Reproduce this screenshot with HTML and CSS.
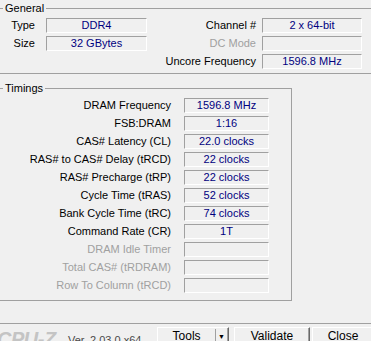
FILE: index.html
```html
<!DOCTYPE html>
<html>
<head>
<meta charset="utf-8">
<link rel="stylesheet" href="styles.css">
</head>
<body>
<div class="app">
  <fieldset class="group general">
    <legend>General</legend>
    <div class="ggrid">
      <span class="lbl l1">Type</span><span class="val">DDR4</span>
      <span class="lbl l2">Channel #</span><span class="val">2 x 64-bit</span>
      <span class="lbl l1">Size</span><span class="val">32 GBytes</span>
      <span class="lbl l2 dis">DC Mode</span><span class="val"></span>
      <span></span><span></span>
      <span class="lbl l2">Uncore Frequency</span><span class="val">1596.8 MHz</span>
    </div>
  </fieldset>
  <fieldset class="group timings">
    <legend>Timings</legend>
    <div class="tgrid">
      <span class="lbl">DRAM Frequency</span><span class="val">1596.8 MHz</span>
      <span class="lbl">FSB:DRAM</span><span class="val">1:16</span>
      <span class="lbl">CAS# Latency (CL)</span><span class="val">22.0 clocks</span>
      <span class="lbl">RAS# to CAS# Delay (tRCD)</span><span class="val">22 clocks</span>
      <span class="lbl">RAS# Precharge (tRP)</span><span class="val">22 clocks</span>
      <span class="lbl">Cycle Time (tRAS)</span><span class="val">52 clocks</span>
      <span class="lbl">Bank Cycle Time (tRC)</span><span class="val">74 clocks</span>
      <span class="lbl">Command Rate (CR)</span><span class="val">1T</span>
      <span class="lbl dis">DRAM Idle Timer</span><span class="val"></span>
      <span class="lbl dis">Total CAS# (tRDRAM)</span><span class="val"></span>
      <span class="lbl dis">Row To Column (tRCD)</span><span class="val"></span>
    </div>
  </fieldset>
  <div class="tabedge"></div>
  <div class="bottom">
    <span class="logo">CPU-Z</span>
    <span class="ver">Ver. 2.03.0.x64</span>
    <div class="btn tools"><span class="tl">Tools</span><span class="arrow">&#9660;</span></div>
    <div class="btn validate">Validate</div>
    <div class="btn close">Close</div>
  </div>
</div>
</body>
</html>
```

FILE: styles.css
```css
html, body {
  margin: 0;
  padding: 0;
  background: #f0f0f0;
  width: 371px;
  height: 341px;
  overflow: hidden;
}
.app {
  margin-left: -2px;
  width: 376px;
  padding-top: 2px;
  font-family: "Liberation Sans", Arial, sans-serif;
  font-size: 11px;
  color: #000;
}
.group {
  margin: 0;
  padding: 0;
  border: 1px solid #a0a0a0;
  min-width: 0;
}
.group legend {
  padding: 0 2px;
  margin-left: 4px;
  line-height: 13px;
  font-size: 11px;
}
.ggrid {
  margin: 3px 0 4px 1px;
  display: grid;
  grid-template-columns: 46px 101px 115px 100px;
  grid-auto-rows: 15px;
  row-gap: 3px;
}
.lbl {
  line-height: 15px;
  text-align: right;
  white-space: nowrap;
}
.l1 { padding-right: 11px; }
.l2 { padding-right: 6px; }
.dis { color: #a0a0a0; }
.val {
  box-sizing: border-box;
  border-top: 1px solid #a0a0a0;
  border-left: 1px solid #a0a0a0;
  border-bottom: 1px solid #fff;
  border-right: 1px solid #fff;
  color: #000080;
  text-align: center;
  line-height: 13px;
  white-space: nowrap;
}
.timings {
  margin-top: 8px;
  width: 294px;
  box-sizing: border-box;
}
.tgrid {
  margin: 3px 0 7px 1px;
  display: grid;
  grid-template-columns: 184px 85px;
  grid-auto-rows: 15px;
  row-gap: 3px;
}
.tgrid .lbl { padding-right: 13px; }
.tabedge {
  margin-top: 22px;
  height: 0;
  border-top: 1px solid #a0a0a0;
}
.bottom {
  display: flex;
  align-items: flex-start;
  padding-top: 3px;
  margin-left: 2px;
}
.logo {
  font-family: "Liberation Sans", Arial, sans-serif;
  font-weight: bold;
  font-style: italic;
  font-size: 20px;
  line-height: 20px;
  color: #c4c4c4;
  margin-left: -3px;
  width: 71px;
  margin-top: 2px;
  letter-spacing: -0.5px;
}
.ver {
  color: #4a4a4a;
  font-size: 11px;
  line-height: 13px;
  margin-top: 7px;
  width: 89px;
}
.btn {
  box-sizing: border-box;
  height: 23px;
  background: #f0f0f0;
  border-top: 1px solid #fff;
  border-left: 1px solid #fff;
  border-right: 1px solid #696969;
  border-bottom: 1px solid #696969;
  box-shadow: inset -1px -1px 0 #a0a0a0;
  text-align: center;
  font-size: 12px;
  line-height: 17px;
}
.tools {
  width: 72px;
  display: flex;
}
.tools .tl {
  width: 58px;
  text-align: center;
}
.tools .arrow {
  border-left: 1px solid #a0a0a0;
  font-size: 7px;
  width: 11px;
  line-height: 15px;
  height: 15px;
  margin-top: 1px;
  border-right: 1px solid #a0a0a0;
}
.validate {
  width: 76px;
  margin-left: 5px;
}
.close {
  width: 62px;
  margin-left: 2px;
}
```
